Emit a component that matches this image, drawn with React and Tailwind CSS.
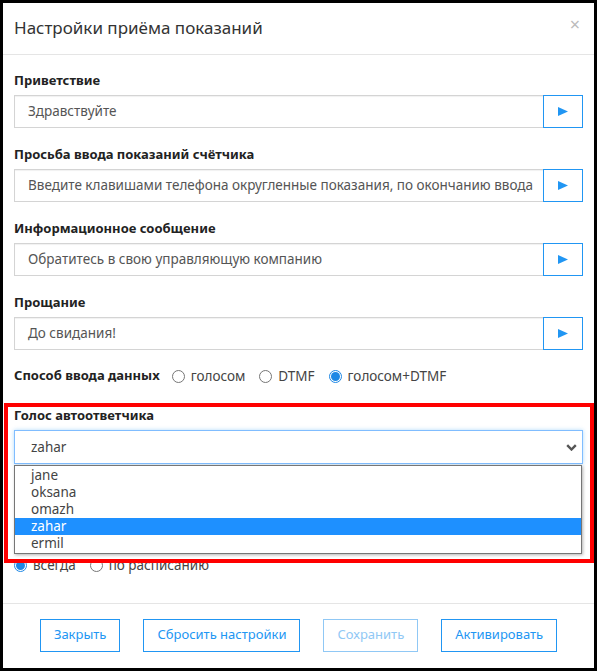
import { useState } from "react";

const FONT = { fontFamily: '"Noto Sans", "Open Sans", Arial, sans-serif' };

const fields = [
	{ label: "Приветствие", value: "Здравствуйте" },
	{ label: "Просьба ввода показаний счётчика", value: "Введите клавишами телефона округленные показания, по окончанию ввода" },
	{ label: "Информационное сообщение", value: "Обратитесь в свою управляющую компанию" },
	{ label: "Прощание", value: "До свидания!" },
];

const voices = ["jane", "oksana", "omazh", "zahar", "ermil"];

function Radio({ checked, label }) {
	return (
		<label className="flex items-center gap-[6px]">
			{checked ? (
				<span className="w-[13px] h-[13px] rounded-full border border-[#1e88e5] bg-white flex items-center justify-center">
					<span className="w-[9px] h-[9px] rounded-full bg-[#1e88e5]" />
				</span>
			) : (
				<span className="w-[13px] h-[13px] rounded-full border border-[#767676] bg-white" />
			)}
			<span className="text-[13.5px] text-[#444]">{label}</span>
		</label>
	);
}

function PlayButton() {
	return (
		<button className="w-[40px] h-[33px] border border-[#2196f3] flex items-center justify-center bg-white shrink-0">
			<svg width="10" height="9" viewBox="0 0 10 9">
				<path d="M0 0 L10 4.5 L0 9 Z" fill="#2196f3" />
			</svg>
		</button>
	);
}

export default function App() {
	const [mode] = useState("both");

	return (
		<div className="bg-black h-[671px] p-[3px]" style={FONT}>
			<div className="bg-white h-full relative flex flex-col">
				<div className="h-[52px] border-b border-[#e5e5e5] flex items-center justify-between pl-[11px] pr-[14px] shrink-0">
					<h1 className="text-[17px] text-[#333] pb-[1px]">Настройки приёма показаний</h1>
					<span className="text-[#bbb] text-[18px] leading-none -mt-[10px]">×</span>
				</div>

				<div className="flex-1 px-[11px] pt-[15px]">
					{fields.map((f) => (
						<div key={f.label} className="mb-[16px]">
							<div className="text-[13px] font-bold text-[#222] leading-[20px] mb-[5px]">{f.label}</div>
							<div className="flex">
								<div className="flex-1 h-[33px] border border-[#d4d4d4] border-r-0 flex items-center px-[13px] text-[13.5px] text-[#555] whitespace-nowrap overflow-hidden shadow-[inset_0_1px_1px_rgba(0,0,0,0.06)]">
									{f.value}
								</div>
								<PlayButton />
							</div>
						</div>
					))}

					<div className="flex items-center gap-[14px] leading-[20px] mt-[4px]">
						<span className="text-[13px] font-bold text-[#222] -mt-[3px] mr-[-2px]">Способ ввода данных</span>
						<Radio checked={mode === "voice"} label="голосом" />
						<Radio checked={mode === "dtmf"} label="DTMF" />
						<Radio checked={mode === "both"} label="голосом+DTMF" />
					</div>

					<div className="mt-[19px]">
						<div className="text-[13px] font-bold text-[#222] leading-[20px] mb-[5px]">Голос автоответчика</div>
						<div className="h-[34px] border border-[#80bdff] shadow-[0_0_4px_rgba(33,150,243,0.35)] flex items-center justify-between pl-[16px] pr-[5px] text-[13.5px] text-[#444]">
							<span>zahar</span>
							<svg width="11" height="7" viewBox="0 0 11 7">
								<path d="M1.2 1.2 L5.5 5.5 L9.8 1.2" stroke="#555" strokeWidth="2.4" fill="none" />
							</svg>
						</div>
					</div>

					<div className="flex items-center gap-[14px] mt-[91px] leading-[20px]">
						<Radio checked label="всегда" />
						<Radio label="по расписанию" />
					</div>
				</div>

				<div className="h-[65px] border-t border-[#e5e5e5] flex items-center justify-center gap-[23px] pb-[2px] shrink-0">
					<button className="h-[33px] px-[13px] border border-[#2196f3] text-[13px] text-[#2196f3]">Закрыть</button>
					<button className="h-[33px] px-[13px] border border-[#2196f3] text-[13px] text-[#2196f3]">Сбросить настройки</button>
					<button className="h-[33px] px-[13px] border border-[#90c8f5] text-[13px] text-[#90c8f5]">Сохранить</button>
					<button className="h-[33px] px-[13px] border border-[#2196f3] text-[13px] text-[#2196f3]">Активировать</button>
				</div>

				<div className="absolute left-[11px] top-[462px] w-[568px] border border-[#767676] bg-white shadow-[1px_1px_3px_rgba(0,0,0,0.3)] py-[1px]">
					{voices.map((v) => (
						<div
							key={v}
							className={`h-[17px] leading-[17px] pl-[16px] text-[13.5px] ${v === "zahar" ? "bg-[#1e90ff] text-white" : "text-[#444]"}`}
						>
							{v}
						</div>
					))}
				</div>

				<div className="absolute left-[1px] top-[400px] w-[590px] h-[160px] border-[4px] border-[#ff0000] pointer-events-none" />
			</div>
		</div>
	);
}
